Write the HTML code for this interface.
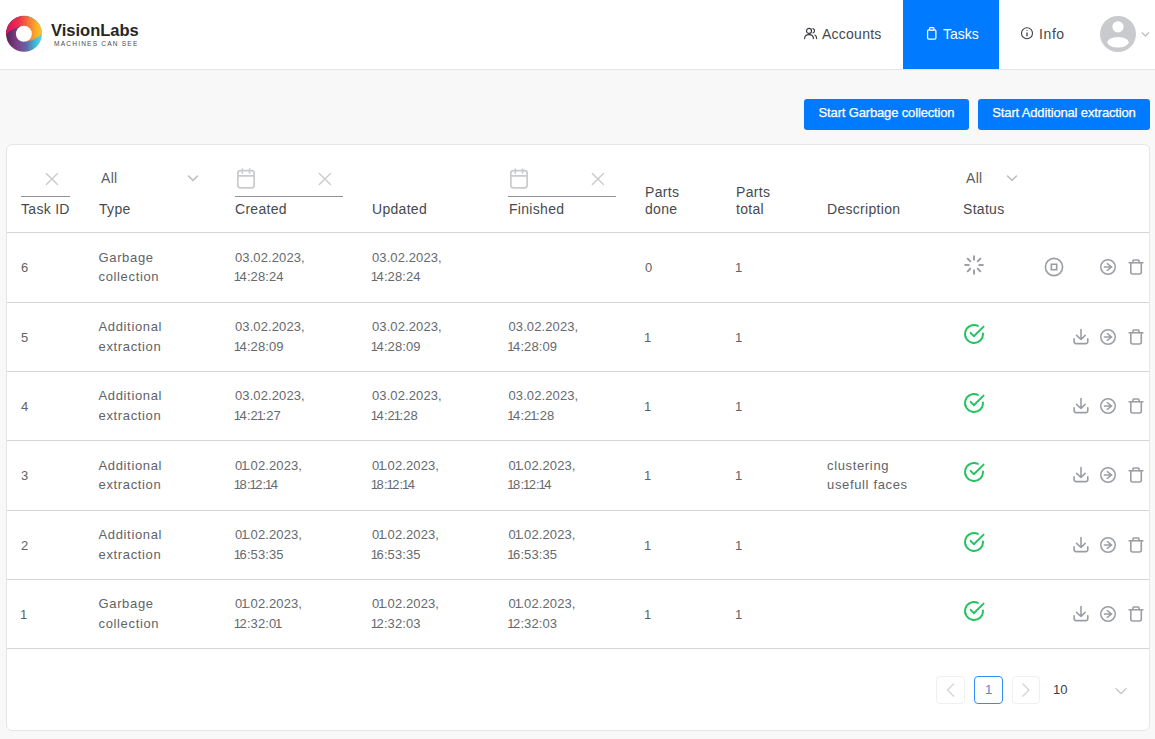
<!DOCTYPE html>
<html><head><meta charset="utf-8">
<style>
*{box-sizing:border-box;margin:0;padding:0}
html,body{width:1155px;height:739px;overflow:hidden;background:#f8f8f8;font-family:"Liberation Sans",sans-serif;position:relative}
.a{position:absolute;white-space:nowrap}
#hdr{position:absolute;left:0;top:0;width:1155px;height:70px;background:#fff;border-bottom:1px solid #e4e4e4}
.nav{font-size:14px;line-height:17px;color:#45484d}
.btn{position:absolute;top:99px;height:31px;background:#007bff;border-radius:3px;color:#fff;font-size:13px;line-height:28px;letter-spacing:-0.15px;-webkit-text-stroke:0.25px #fff;text-align:center}
#card{position:absolute;left:6px;top:144px;width:1144px;height:587px;background:#fff;border:1px solid #e6e6e6;border-radius:6px}
.hl{position:absolute;left:7px;width:1142px;height:1px;background:#d3d5d8}
.th{font-size:14px;line-height:17px;color:#464a50;letter-spacing:0.3px}
.td{font-size:13px;line-height:19.5px;color:#606368;letter-spacing:0.65px}
.dt{font-size:13px;line-height:19.5px;color:#66696e;letter-spacing:0.1px}
.td i{font-style:normal;margin-left:-1px}
.dt i{font-style:normal;letter-spacing:-1.5px;margin-left:-1.2px}
.ul{position:absolute;height:1px;background:#8f949a;top:196px}
</style></head><body>
<div id="hdr"></div>
<!-- logo -->
<svg class="a" style="left:0;top:0" width="160" height="70" viewBox="0 0 160 70">
  <defs>
    <linearGradient id="gt" x1="0" y1="0" x2="1" y2="0"><stop offset="0" stop-color="#d5125f"/><stop offset="0.35" stop-color="#ef2f4b"/><stop offset="0.62" stop-color="#f8743a"/><stop offset="0.85" stop-color="#fbb027"/><stop offset="1" stop-color="#fcc623"/></linearGradient>
    <linearGradient id="gb" x1="0" y1="0" x2="1" y2="0"><stop offset="0" stop-color="#5a2257"/><stop offset="0.3" stop-color="#7a3f84"/><stop offset="0.58" stop-color="#6169a6"/><stop offset="0.8" stop-color="#3db8d2"/><stop offset="1" stop-color="#5bd7eb"/></linearGradient>
  </defs>
  <circle cx="24" cy="33.8" r="18" fill="url(#gb)"/>
  <path d="M6,34.5 A18,18 0 0 1 42,33.6 Q37,39.5 27,41.6 L24,34 L19.6,26.2 Q12,28.5 6,34.5 Z" fill="url(#gt)"/>
  <circle cx="23.9" cy="33.85" r="8" fill="#fff"/>
</svg>
<div class="a" style="left:51px;top:20.5px;font-size:16.5px;line-height:18px;font-weight:bold;color:#262626;letter-spacing:0px">VisionLabs</div>
<div class="a" style="left:54px;top:40px;font-size:6.6px;line-height:8px;font-weight:normal;color:#4a4a4a;letter-spacing:1.18px">MACHINES CAN SEE</div>

<!-- nav -->
<svg class="a" style="left:803px;top:27px" width="15" height="13" viewBox="0 0 15 13" fill="none" stroke="#3a3d42" stroke-width="1.2" stroke-linecap="round">
  <circle cx="6" cy="3.9" r="2.5"/>
  <path d="M1.6,11.6 C1.6,8.8 3.4,7.6 6,7.6 C8.6,7.6 10.4,8.8 10.4,11.6"/>
  <path d="M9.9,1.6 A2.3,2.3 0 0 1 9.9,6"/>
  <path d="M11.9,8 C13,8.5 13.6,9.7 13.6,11.6"/>
</svg>
<div class="a nav" style="left:822px;top:25.5px;letter-spacing:0.25px">Accounts</div>
<div class="a" style="left:903px;top:0;width:96px;height:69px;background:#007bff"></div>
<svg class="a" style="left:925px;top:26px" width="13" height="15" viewBox="0 0 13 15" fill="none" stroke="#fff" stroke-width="1.25" stroke-linejoin="round">
  <rect x="2.6" y="3.9" width="8.3" height="9.3" rx="1.2"/>
  <rect x="4.6" y="1.7" width="4.3" height="2.5" rx="0.8" fill="#007bff"/>
</svg>
<div class="a nav" style="left:943px;top:25.5px;color:#fff">Tasks</div>
<svg class="a" style="left:1020px;top:26px" width="14" height="14" viewBox="0 0 14 14" fill="none" stroke="#3a3d42" stroke-width="1.1">
  <circle cx="7" cy="7.3" r="5.5"/>
  <path d="M7,6.4 V10.2" stroke-width="1.3"/>
  <circle cx="7" cy="4.5" r="0.6" fill="#3a3d42" stroke="none"/>
</svg>
<div class="a nav" style="left:1039px;top:25.5px;letter-spacing:0.6px">Info</div>
<svg class="a" style="left:1100px;top:15.5px" width="36" height="36" viewBox="0 0 36 36">
  <circle cx="18" cy="18" r="18" fill="#c9cacd"/>
  <circle cx="18" cy="10.8" r="5.6" fill="#fff"/>
  <ellipse cx="18" cy="26.2" rx="10.7" ry="5.3" fill="#fff"/>
</svg>
<svg class="a" style="left:1141px;top:30.6px" width="9" height="7" viewBox="0 0 9 7" fill="none" stroke="#b8bbbf" stroke-width="1.1">
  <path d="M0.8,1.5 L4.4,5 L8,1.5"/>
</svg>
<!-- buttons -->
<div class="btn" style="left:804px;width:165px">Start Garbage collection</div>
<div class="btn" style="left:978px;width:172px">Start Additional extraction</div>
<!-- card -->
<div id="card"></div>
<!-- table header -->
<svg class="a" style="left:45px;top:172px" width="14" height="14" viewBox="0 0 14 14" fill="none" stroke="#c8cacd" stroke-width="1.35" stroke-linecap="round"><path d="M1.3,1.4 L12.5,12.6 M12.5,1.4 L1.3,12.6"/></svg>
<div class="ul" style="left:21px;width:49px"></div>
<div class="a th" style="left:21px;top:201.3px">Task ID</div>
<div class="a th" style="left:101px;top:170px;color:#5a5d62">All</div>
<svg class="a" style="left:187px;top:174px" width="12" height="8" viewBox="0 0 12 8" fill="none" stroke="#bdbfc2" stroke-width="1.6" stroke-linecap="round"><path d="M1.5,2 L6,6.4 L10.5,2"/></svg>
<div class="a th" style="left:99px;top:201.3px">Type</div>
<svg class="a" style="left:236px;top:167px" width="20" height="22" viewBox="0 0 20 22" fill="none" stroke="#c9cbce" stroke-width="1.7" stroke-linecap="round"><rect x="1.85" y="3.65" width="16.3" height="17.3" rx="2.6"/><path d="M1.85,8.9 H18.15 M6.3,2 V6 M13.6,2 V6"/></svg>
<svg class="a" style="left:318px;top:172px" width="14" height="14" viewBox="0 0 14 14" fill="none" stroke="#c8cacd" stroke-width="1.35" stroke-linecap="round"><path d="M1.3,1.4 L12.5,12.6 M12.5,1.4 L1.3,12.6"/></svg>
<div class="ul" style="left:235px;width:108px"></div>
<div class="a th" style="left:235px;top:201.3px">Created</div>
<div class="a th" style="left:372px;top:201.3px">Updated</div>
<svg class="a" style="left:509px;top:167px" width="20" height="22" viewBox="0 0 20 22" fill="none" stroke="#c9cbce" stroke-width="1.7" stroke-linecap="round"><rect x="1.85" y="3.65" width="16.3" height="17.3" rx="2.6"/><path d="M1.85,8.9 H18.15 M6.3,2 V6 M13.6,2 V6"/></svg>
<svg class="a" style="left:591px;top:172px" width="14" height="14" viewBox="0 0 14 14" fill="none" stroke="#c8cacd" stroke-width="1.35" stroke-linecap="round"><path d="M1.3,1.4 L12.5,12.6 M12.5,1.4 L1.3,12.6"/></svg>
<div class="ul" style="left:508px;width:108px"></div>
<div class="a th" style="left:509px;top:201.3px">Finished</div>
<div class="a th" style="left:645px;top:184.3px">Parts<br>done</div>
<div class="a th" style="left:736px;top:184.3px">Parts<br>total</div>
<div class="a th" style="left:827px;top:201.3px">Description</div>
<div class="a th" style="left:966px;top:170px;color:#5a5d62">All</div>
<svg class="a" style="left:1006px;top:174px" width="12" height="8" viewBox="0 0 12 8" fill="none" stroke="#bdbfc2" stroke-width="1.6" stroke-linecap="round"><path d="M1.5,2 L6,6.4 L10.5,2"/></svg>
<div class="a th" style="left:963px;top:201.3px">Status</div>
<div class="hl" style="top:232px"></div>
<div class="hl" style="top:302px"></div>
<div class="hl" style="top:371px"></div>
<div class="hl" style="top:440px"></div>
<div class="hl" style="top:510px"></div>
<div class="hl" style="top:579px"></div>
<div class="hl" style="top:648px"></div>
<div class="a td" style="left:21px;top:258.0px">6</div>
<div class="a td" style="left:98.5px;top:247.5px">Garbage<br>collection</div>
<div class="a dt" style="left:235px;top:247.5px">03.02.2023,<br><i>1</i>4:28:24</div>
<div class="a dt" style="left:372px;top:247.5px">03.02.2023,<br><i>1</i>4:28:24</div>
<div class="a td" style="left:645px;top:258.0px">0</div>
<div class="a td" style="left:736px;top:258.0px"><i>1</i></div>
<svg class="a" style="left:962.9px;top:253.5px" width="22" height="22" viewBox="-11 -11 22 22" stroke="#92969c" stroke-width="1.8" stroke-linecap="butt"><line x1="0" y1="-4.5" x2="0" y2="-9.6" transform="rotate(0)"/><line x1="0" y1="-4.5" x2="0" y2="-9.6" transform="rotate(45)"/><line x1="0" y1="-4.5" x2="0" y2="-9.6" transform="rotate(90)"/><line x1="0" y1="-4.5" x2="0" y2="-9.6" transform="rotate(135)"/><line x1="0" y1="-4.5" x2="0" y2="-9.6" transform="rotate(180)"/><line x1="0" y1="-4.5" x2="0" y2="-9.6" transform="rotate(225)"/><line x1="0" y1="-4.5" x2="0" y2="-9.6" transform="rotate(270)"/><line x1="0" y1="-4.5" x2="0" y2="-9.6" transform="rotate(315)"/></svg>
<svg class="a" style="left:1042.5px;top:256.4px" width="22" height="22" viewBox="-11 -11 22 22" fill="none" stroke="#9a9ea4" stroke-width="1.6"><circle r="8.6"/><rect x="-2.7" y="-2.7" width="5.4" height="5.4"/></svg>
<svg class="a" style="left:1098.0px;top:257.4px" width="20" height="20" viewBox="-10 -10 20 20" fill="none" stroke="#9a9ea4" stroke-width="1.5" stroke-linecap="round" stroke-linejoin="round"><circle r="7.25"/><path d="M-3.6,0 H3.7 M-0.7,-3.3 L3.7,0 L-0.7,3.3"/></svg>
<svg class="a" style="left:1126.0px;top:257.4px" width="20" height="20" viewBox="-10 -10 20 20" fill="none" stroke="#9a9ea4" stroke-width="1.6" stroke-linecap="round" stroke-linejoin="round"><path d="M-6.9,-4.3 H6.9"/><path d="M-3.3,-4.3 L-2.9,-6.3 Q-2.7,-7 -2,-7 H2 Q2.7,-7 2.9,-6.3 L3.3,-4.3"/><path d="M-5.2,-4.3 V5 Q-5.2,7 -3.2,7 H3.3 Q5.3,7 5.3,5 V-4.3"/></svg>
<div class="a td" style="left:21px;top:327.5px">5</div>
<div class="a td" style="left:98.5px;top:317.0px">Additional<br>extraction</div>
<div class="a dt" style="left:235px;top:317.0px">03.02.2023,<br><i>1</i>4:28:09</div>
<div class="a dt" style="left:372px;top:317.0px">03.02.2023,<br><i>1</i>4:28:09</div>
<div class="a dt" style="left:508.5px;top:317.0px">03.02.2023,<br><i>1</i>4:28:09</div>
<div class="a td" style="left:645px;top:327.5px"><i>1</i></div>
<div class="a td" style="left:736px;top:327.5px"><i>1</i></div>
<svg class="a" style="left:963.1px;top:322.8px" width="22" height="22" viewBox="-11 -11 22 22" fill="none" stroke="#22c35e" stroke-width="1.9" stroke-linecap="round" stroke-linejoin="round"><path d="M3.9,-8.1 A9,9 0 1 0 9,-0.6"/><path d="M-3.4,-1.2 L-0.2,2.2 L9.6,-7.4"/></svg>
<svg class="a" style="left:1071.0px;top:326.9px" width="20" height="20" viewBox="-10 -10 20 20" fill="none" stroke="#9a9ea4" stroke-width="1.6" stroke-linecap="round" stroke-linejoin="round"><path d="M0,-7.5 V2.4 M-4.4,-1.6 L0,2.5 L4.1,-1.6"/><path d="M-6.9,1.8 V4.6 Q-6.9,6.6 -4.9,6.6 H4.8 Q6.8,6.6 6.8,4.6 V1.8"/></svg>
<svg class="a" style="left:1098.0px;top:326.9px" width="20" height="20" viewBox="-10 -10 20 20" fill="none" stroke="#9a9ea4" stroke-width="1.5" stroke-linecap="round" stroke-linejoin="round"><circle r="7.25"/><path d="M-3.6,0 H3.7 M-0.7,-3.3 L3.7,0 L-0.7,3.3"/></svg>
<svg class="a" style="left:1126.0px;top:326.9px" width="20" height="20" viewBox="-10 -10 20 20" fill="none" stroke="#9a9ea4" stroke-width="1.6" stroke-linecap="round" stroke-linejoin="round"><path d="M-6.9,-4.3 H6.9"/><path d="M-3.3,-4.3 L-2.9,-6.3 Q-2.7,-7 -2,-7 H2 Q2.7,-7 2.9,-6.3 L3.3,-4.3"/><path d="M-5.2,-4.3 V5 Q-5.2,7 -3.2,7 H3.3 Q5.3,7 5.3,5 V-4.3"/></svg>
<div class="a td" style="left:21px;top:396.5px">4</div>
<div class="a td" style="left:98.5px;top:386.0px">Additional<br>extraction</div>
<div class="a dt" style="left:235px;top:386.0px">03.02.2023,<br><i>1</i>4:2<i>1</i>:27</div>
<div class="a dt" style="left:372px;top:386.0px">03.02.2023,<br><i>1</i>4:2<i>1</i>:28</div>
<div class="a dt" style="left:508.5px;top:386.0px">03.02.2023,<br><i>1</i>4:2<i>1</i>:28</div>
<div class="a td" style="left:645px;top:396.5px"><i>1</i></div>
<div class="a td" style="left:736px;top:396.5px"><i>1</i></div>
<svg class="a" style="left:963.1px;top:391.8px" width="22" height="22" viewBox="-11 -11 22 22" fill="none" stroke="#22c35e" stroke-width="1.9" stroke-linecap="round" stroke-linejoin="round"><path d="M3.9,-8.1 A9,9 0 1 0 9,-0.6"/><path d="M-3.4,-1.2 L-0.2,2.2 L9.6,-7.4"/></svg>
<svg class="a" style="left:1071.0px;top:395.9px" width="20" height="20" viewBox="-10 -10 20 20" fill="none" stroke="#9a9ea4" stroke-width="1.6" stroke-linecap="round" stroke-linejoin="round"><path d="M0,-7.5 V2.4 M-4.4,-1.6 L0,2.5 L4.1,-1.6"/><path d="M-6.9,1.8 V4.6 Q-6.9,6.6 -4.9,6.6 H4.8 Q6.8,6.6 6.8,4.6 V1.8"/></svg>
<svg class="a" style="left:1098.0px;top:395.9px" width="20" height="20" viewBox="-10 -10 20 20" fill="none" stroke="#9a9ea4" stroke-width="1.5" stroke-linecap="round" stroke-linejoin="round"><circle r="7.25"/><path d="M-3.6,0 H3.7 M-0.7,-3.3 L3.7,0 L-0.7,3.3"/></svg>
<svg class="a" style="left:1126.0px;top:395.9px" width="20" height="20" viewBox="-10 -10 20 20" fill="none" stroke="#9a9ea4" stroke-width="1.6" stroke-linecap="round" stroke-linejoin="round"><path d="M-6.9,-4.3 H6.9"/><path d="M-3.3,-4.3 L-2.9,-6.3 Q-2.7,-7 -2,-7 H2 Q2.7,-7 2.9,-6.3 L3.3,-4.3"/><path d="M-5.2,-4.3 V5 Q-5.2,7 -3.2,7 H3.3 Q5.3,7 5.3,5 V-4.3"/></svg>
<div class="a td" style="left:21px;top:466.0px">3</div>
<div class="a td" style="left:98.5px;top:455.5px">Additional<br>extraction</div>
<div class="a dt" style="left:235px;top:455.5px">0<i>1</i>.02.2023,<br><i>1</i>8:<i>1</i>2:<i>1</i>4</div>
<div class="a dt" style="left:372px;top:455.5px">0<i>1</i>.02.2023,<br><i>1</i>8:<i>1</i>2:<i>1</i>4</div>
<div class="a dt" style="left:508.5px;top:455.5px">0<i>1</i>.02.2023,<br><i>1</i>8:<i>1</i>2:<i>1</i>4</div>
<div class="a td" style="left:645px;top:466.0px"><i>1</i></div>
<div class="a td" style="left:736px;top:466.0px"><i>1</i></div>
<div class="a td" style="left:827px;top:455.5px">clustering<br>usefull faces</div>
<svg class="a" style="left:963.1px;top:461.3px" width="22" height="22" viewBox="-11 -11 22 22" fill="none" stroke="#22c35e" stroke-width="1.9" stroke-linecap="round" stroke-linejoin="round"><path d="M3.9,-8.1 A9,9 0 1 0 9,-0.6"/><path d="M-3.4,-1.2 L-0.2,2.2 L9.6,-7.4"/></svg>
<svg class="a" style="left:1071.0px;top:465.4px" width="20" height="20" viewBox="-10 -10 20 20" fill="none" stroke="#9a9ea4" stroke-width="1.6" stroke-linecap="round" stroke-linejoin="round"><path d="M0,-7.5 V2.4 M-4.4,-1.6 L0,2.5 L4.1,-1.6"/><path d="M-6.9,1.8 V4.6 Q-6.9,6.6 -4.9,6.6 H4.8 Q6.8,6.6 6.8,4.6 V1.8"/></svg>
<svg class="a" style="left:1098.0px;top:465.4px" width="20" height="20" viewBox="-10 -10 20 20" fill="none" stroke="#9a9ea4" stroke-width="1.5" stroke-linecap="round" stroke-linejoin="round"><circle r="7.25"/><path d="M-3.6,0 H3.7 M-0.7,-3.3 L3.7,0 L-0.7,3.3"/></svg>
<svg class="a" style="left:1126.0px;top:465.4px" width="20" height="20" viewBox="-10 -10 20 20" fill="none" stroke="#9a9ea4" stroke-width="1.6" stroke-linecap="round" stroke-linejoin="round"><path d="M-6.9,-4.3 H6.9"/><path d="M-3.3,-4.3 L-2.9,-6.3 Q-2.7,-7 -2,-7 H2 Q2.7,-7 2.9,-6.3 L3.3,-4.3"/><path d="M-5.2,-4.3 V5 Q-5.2,7 -3.2,7 H3.3 Q5.3,7 5.3,5 V-4.3"/></svg>
<div class="a td" style="left:21px;top:535.5px">2</div>
<div class="a td" style="left:98.5px;top:525.0px">Additional<br>extraction</div>
<div class="a dt" style="left:235px;top:525.0px">0<i>1</i>.02.2023,<br><i>1</i>6:53:35</div>
<div class="a dt" style="left:372px;top:525.0px">0<i>1</i>.02.2023,<br><i>1</i>6:53:35</div>
<div class="a dt" style="left:508.5px;top:525.0px">0<i>1</i>.02.2023,<br><i>1</i>6:53:35</div>
<div class="a td" style="left:645px;top:535.5px"><i>1</i></div>
<div class="a td" style="left:736px;top:535.5px"><i>1</i></div>
<svg class="a" style="left:963.1px;top:530.8px" width="22" height="22" viewBox="-11 -11 22 22" fill="none" stroke="#22c35e" stroke-width="1.9" stroke-linecap="round" stroke-linejoin="round"><path d="M3.9,-8.1 A9,9 0 1 0 9,-0.6"/><path d="M-3.4,-1.2 L-0.2,2.2 L9.6,-7.4"/></svg>
<svg class="a" style="left:1071.0px;top:534.9px" width="20" height="20" viewBox="-10 -10 20 20" fill="none" stroke="#9a9ea4" stroke-width="1.6" stroke-linecap="round" stroke-linejoin="round"><path d="M0,-7.5 V2.4 M-4.4,-1.6 L0,2.5 L4.1,-1.6"/><path d="M-6.9,1.8 V4.6 Q-6.9,6.6 -4.9,6.6 H4.8 Q6.8,6.6 6.8,4.6 V1.8"/></svg>
<svg class="a" style="left:1098.0px;top:534.9px" width="20" height="20" viewBox="-10 -10 20 20" fill="none" stroke="#9a9ea4" stroke-width="1.5" stroke-linecap="round" stroke-linejoin="round"><circle r="7.25"/><path d="M-3.6,0 H3.7 M-0.7,-3.3 L3.7,0 L-0.7,3.3"/></svg>
<svg class="a" style="left:1126.0px;top:534.9px" width="20" height="20" viewBox="-10 -10 20 20" fill="none" stroke="#9a9ea4" stroke-width="1.6" stroke-linecap="round" stroke-linejoin="round"><path d="M-6.9,-4.3 H6.9"/><path d="M-3.3,-4.3 L-2.9,-6.3 Q-2.7,-7 -2,-7 H2 Q2.7,-7 2.9,-6.3 L3.3,-4.3"/><path d="M-5.2,-4.3 V5 Q-5.2,7 -3.2,7 H3.3 Q5.3,7 5.3,5 V-4.3"/></svg>
<div class="a td" style="left:21px;top:604.5px"><i>1</i></div>
<div class="a td" style="left:98.5px;top:594.0px">Garbage<br>collection</div>
<div class="a dt" style="left:235px;top:594.0px">0<i>1</i>.02.2023,<br><i>1</i>2:32:0<i>1</i></div>
<div class="a dt" style="left:372px;top:594.0px">0<i>1</i>.02.2023,<br><i>1</i>2:32:03</div>
<div class="a dt" style="left:508.5px;top:594.0px">0<i>1</i>.02.2023,<br><i>1</i>2:32:03</div>
<div class="a td" style="left:645px;top:604.5px"><i>1</i></div>
<div class="a td" style="left:736px;top:604.5px"><i>1</i></div>
<svg class="a" style="left:963.1px;top:599.8px" width="22" height="22" viewBox="-11 -11 22 22" fill="none" stroke="#22c35e" stroke-width="1.9" stroke-linecap="round" stroke-linejoin="round"><path d="M3.9,-8.1 A9,9 0 1 0 9,-0.6"/><path d="M-3.4,-1.2 L-0.2,2.2 L9.6,-7.4"/></svg>
<svg class="a" style="left:1071.0px;top:603.9px" width="20" height="20" viewBox="-10 -10 20 20" fill="none" stroke="#9a9ea4" stroke-width="1.6" stroke-linecap="round" stroke-linejoin="round"><path d="M0,-7.5 V2.4 M-4.4,-1.6 L0,2.5 L4.1,-1.6"/><path d="M-6.9,1.8 V4.6 Q-6.9,6.6 -4.9,6.6 H4.8 Q6.8,6.6 6.8,4.6 V1.8"/></svg>
<svg class="a" style="left:1098.0px;top:603.9px" width="20" height="20" viewBox="-10 -10 20 20" fill="none" stroke="#9a9ea4" stroke-width="1.5" stroke-linecap="round" stroke-linejoin="round"><circle r="7.25"/><path d="M-3.6,0 H3.7 M-0.7,-3.3 L3.7,0 L-0.7,3.3"/></svg>
<svg class="a" style="left:1126.0px;top:603.9px" width="20" height="20" viewBox="-10 -10 20 20" fill="none" stroke="#9a9ea4" stroke-width="1.6" stroke-linecap="round" stroke-linejoin="round"><path d="M-6.9,-4.3 H6.9"/><path d="M-3.3,-4.3 L-2.9,-6.3 Q-2.7,-7 -2,-7 H2 Q2.7,-7 2.9,-6.3 L3.3,-4.3"/><path d="M-5.2,-4.3 V5 Q-5.2,7 -3.2,7 H3.3 Q5.3,7 5.3,5 V-4.3"/></svg>
<div class="a" style="left:936px;top:676px;width:29px;height:28px;border:1px solid #efefef;border-radius:4px"></div>
<svg class="a" style="left:944px;top:681px" width="14" height="18" viewBox="0 0 14 18" fill="none" stroke="#d4d5d7" stroke-width="1.4"><path d="M10,2.5 L3.5,9 L10,15.5"/></svg>
<div class="a" style="left:974px;top:676px;width:29px;height:28px;border:1px solid #2f8cff;border-radius:4px;font-size:13px;line-height:26px;text-align:center;color:#5b7fe0">1</div>
<div class="a" style="left:1012px;top:676px;width:28px;height:28px;border:1px solid #efefef;border-radius:4px"></div>
<svg class="a" style="left:1019px;top:681px" width="14" height="18" viewBox="0 0 14 18" fill="none" stroke="#d4d5d7" stroke-width="1.4"><path d="M3.5,2.5 L10,9 L3.5,15.5"/></svg>
<div class="a" style="left:1053px;top:681px;font-size:13px;line-height:17px;color:#3b3e43">10</div>
<svg class="a" style="left:1115px;top:686.5px" width="12" height="9" viewBox="0 0 12 9" fill="none" stroke="#bcbfc3" stroke-width="1.3" stroke-linecap="round"><path d="M1,1.6 L6,6.6 L11,1.6"/></svg>
</body></html>
